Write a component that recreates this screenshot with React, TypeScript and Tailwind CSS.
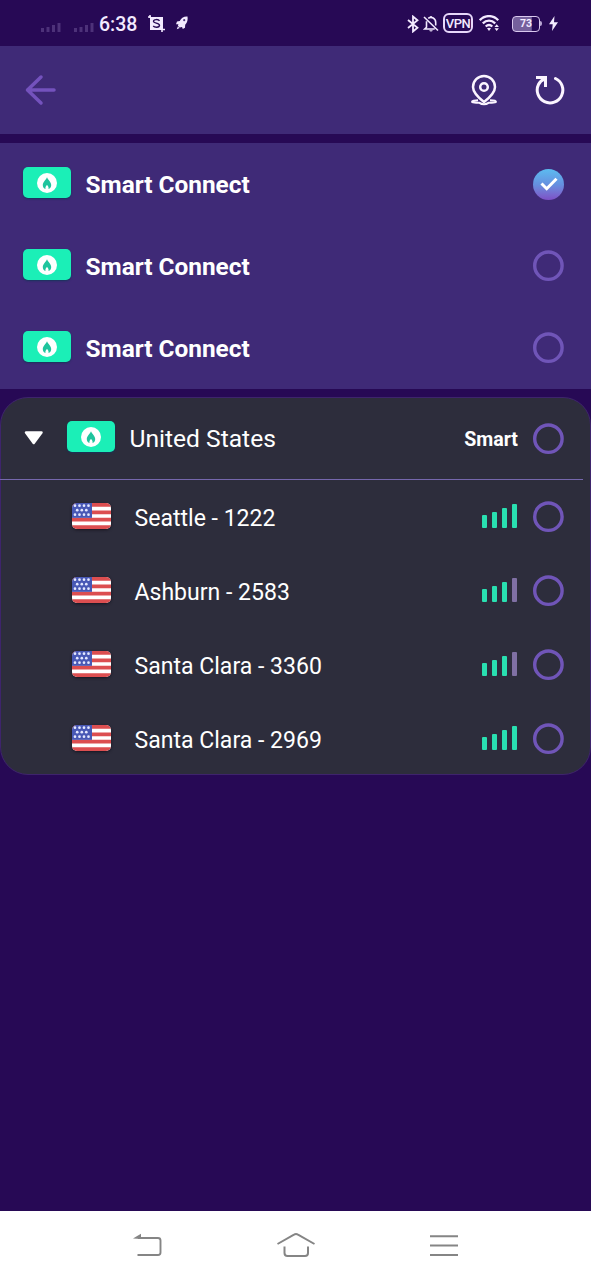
import React from 'react';

function FaintSignal() {
  return (
    <svg className="h-[10px] w-[20px]" viewBox="0 0 20 10" fill="#4d3179">
      <rect x="0" y="6" width="3" height="4" />
      <rect x="5.5" y="5" width="3" height="5" />
      <rect x="11" y="3" width="3" height="7" />
      <rect x="16.5" y="1" width="3" height="9" />
    </svg>
  );
}

function StatusBar() {
  return (
    <div className="flex h-[46px] items-center bg-[#270955] text-[#f3eaff]">
      <div className="mt-[7px] ml-[41px] flex gap-[13px]">
        <FaintSignal />
        <FaintSignal />
      </div>
      <span className="mt-[3px] ml-[5px] w-[38px] whitespace-nowrap text-[19.5px] leading-none font-medium">6:38</span>
      <svg className="mt-px ml-[11px] h-[17px] w-[17px]" viewBox="0 0 17 17" fill="none">
        <path d="M0 2H3M2 0V3M14 14V17M14 14.5H17" stroke="#f3eaff" strokeWidth="1.6" />
        <rect x="2" y="2" width="13" height="13" fill="#f3eaff" />
        <path d="M11.5 5.8C10.5 4.100 5.500 4 5.500 6.500c0 2 6 1.400 6 3.800 0 2.600-5 2.200-6.300.8" stroke="#270955" strokeWidth="1.4" />
      </svg>
      <svg className="ml-[11px] h-[14px] w-[12px]" viewBox="0 0 12 14">
        <path d="M11.5.5C7.5.3 5 2.300 3.800 5L1 5.600 0 8.200l2.400.1-.5 1.800 2 1.500L6 10.900l.8 2.200 2.200-1.400.2-3C11.400 6.500 12 3.500 11.500.500Z" fill="#f3eaff" />
        <circle cx="8.200" cy="4.200" r="1.100" fill="#4c347a" />
        <path d="M1.800 10.500.800 13.300 3.800 12Z" fill="#f3eaff" />
      </svg>
      <svg className="mt-px ml-[219px] h-[18px] w-[12px]" viewBox="0 0 12 18" fill="none" stroke="#f3eaff" strokeWidth="1.800">
        <path d="M1 5 10.500 12.800 6 16.500V1.500L10.500 5.200 1 13" />
      </svg>
      <svg className="mt-px ml-[4px] h-[18px] w-[16px]" viewBox="0 0 16 18" fill="none" stroke="#f3eaff" strokeWidth="1.600">
        <path d="M1 2 15 15.500M5.200 3.300C8.500 1 12.700 3.500 12.700 7.500V10.500M3.500 6.200V12.200L1.700 14H11.700M8 1V2.500" />
        <path d="M6.200 15.300A1.900 1.900 0 0 0 9.800 15.300Z" fill="#f3eaff" stroke="none" />
      </svg>
      <div className="ml-[4px] flex h-[20px] w-[30px] items-center justify-center rounded-[6px] border-2 border-[#e7d7fa] text-[13px] leading-none font-medium tracking-[-0.4px]">VPN</div>
      <svg className="mt-px ml-[6px] h-[17px] w-[21px]" viewBox="0 0 21 17" fill="none" stroke="#f3eaff" strokeWidth="2.300">
        <path d="M.8 5.200C6-.3 14-.3 19.200 5.200M3.800 8.400C7.500 4.700 12.500 4.700 16.200 8.400M6.700 11.500C8.700 9.700 11.300 9.700 13.300 11.500" />
        <path d="M8 13.300Q10 12 12 13.300L10 16Z" fill="#f3eaff" stroke="none" />
        <path d="M15.500 12 17.700 9.300 19.900 12ZM15.500 13.300 17.700 16 19.900 13.300Z" fill="#f3eaff" stroke="none" />
      </svg>
      <div className="mt-px ml-[12px] flex h-[16px] w-[28px] items-center justify-center rounded-[4px] border-[1.5px] border-[#d9c8ee] bg-linear-to-r from-[#75609c] from-70% to-[#270955] to-75% pt-px text-[10.5px] leading-none font-bold">73</div>
      <div className="h-[5px] w-[2px] rounded-r-sm bg-[#b8a5d2]" />
      <svg className="ml-[7px] h-[15px] w-[9px]" viewBox="0 0 9 15"><path d="M5.500 0 0 8.300H3.700L3 15 9 6.200H5Z" fill="#f3eaff" /></svg>
    </div>
  );
}

function Header() {
  return (
    <header className="flex h-[88px] items-center bg-[#3f2a77]">
      <svg className="ml-[25px] h-[32px] w-[32px]" viewBox="0 0 32 32" fill="none" stroke="#7452bd" strokeWidth="3.500" strokeLinecap="round" strokeLinejoin="round">
        <path d="M16 3 2.500 16 16 29M2.500 16H29" />
      </svg>
      <svg className="ml-auto h-[32px] w-[28px]" viewBox="0 0 28 32" fill="none" stroke="#fbf5ff" strokeWidth="2.500" strokeLinejoin="round">
        <path d="M14 28C9.500 24.500 3 18.500 3 13a11 11 0 0 1 22 0c0 5.500-6.500 11.500-11 15Z" />
        <circle cx="14" cy="13" r="3.800" />
        <path d="M8 26.300C4.500 26.300 2 26.900 2 27.800c0 1 4 1 7 .8 3 2 7 2 10 0 3 .2 7 .2 7-.8 0-.9-2.500-1.500-6-1.500" strokeWidth="1.900" />
      </svg>
      <svg className="mr-[26px] ml-[37px] h-[32px] w-[30px]" viewBox="0 0 30 32" fill="none" stroke="#fbf5ff" strokeWidth="3">
        <path d="M20.500 4.500A12.800 12.800 0 1 1 3.500 10.500Q5.500 6.500 9.500 5" strokeLinecap="round" />
        <path d="M1 3.500H10.500V13" />
      </svg>
    </header>
  );
}

function FlameBadge() {
  return (
    <div className="flex h-[31px] w-[48px] shrink-0 items-center justify-center rounded-[5px] bg-[#1befb7] shadow-[0_1px_2px_#17345b]">
      <svg className="h-[20px] w-[20px]" viewBox="0 0 20 20">
        <circle cx="10" cy="10" r="10" fill="#fff" />
        <path d="M10 4.200C11 7 14.200 8.800 14.200 12.200c0 1.900-1.200 3.300-2.700 3.900.4-1.900-.4-3-1.500-4.100-1.100 1.100-1.900 2.200-1.500 4.100-1.500-.6-2.700-2-2.700-3.900C5.800 8.800 9 7 10 4.200Z" fill="#1fc49d" />
      </svg>
    </div>
  );
}

function Radio({ checked = false }: { checked?: boolean }) {
  if (checked) {
    return (
      <div className="flex size-[31px] shrink-0 items-center justify-center rounded-full bg-linear-to-b from-[#5bbcf0] via-[#6590e0] to-[#7c50c6]">
        <svg className="h-[14px] w-[18px]" viewBox="0 0 18 14" fill="none" stroke="#fff" strokeWidth="3"><path d="M1.500 6.500 6.700 11.700 16.500 1.700" /></svg>
      </div>
    );
  }
  return (
    <svg className="block size-[32px] shrink-0" viewBox="0 0 32 32" fill="none">
      <circle cx="15.400" cy="15.700" r="13.700" stroke="#7055b8" strokeWidth="3.400" />
    </svg>
  );
}

function Signal({ strength }: { strength: number }) {
  return (
    <div className="flex h-[24px] w-[35px] items-end justify-between">
      <div className="h-[13px] w-[5px] rounded-[1px] bg-[#29e0b1]" />
      <div className="h-[16px] w-[5px] rounded-[1px] bg-[#29e0b1]" />
      <div className="h-[20px] w-[5px] rounded-[1px] bg-[#29e0b1]" />
      <div className={strength === 4 ? 'h-[24px] w-[5px] rounded-[1px] bg-[#29e0b1]' : 'h-[24px] w-[5px] rounded-[1px] bg-[#8070a4]'} />
    </div>
  );
}

function Flag() {
  const stars = [[3, 2.700], [7.500, 2.700], [12, 2.700], [16.500, 2.700], [5.200, 7.200], [9.800, 7.200], [14.300, 7.200], [3, 11.700], [7.500, 11.700], [12, 11.700], [16.500, 11.700]];
  return (
    <div className="h-[26px] w-[39px] overflow-hidden rounded-[5px] shadow-[0_1px_3px_#171420]">
      <svg className="block h-full w-full" viewBox="0 0 39 26">
        <rect width="39" height="26" fill="#fff" />
        <path d="M0 1.860H39M0 9.290H39M0 16.710H39M0 24.140H39" stroke="#dc4e50" strokeWidth="3.714" />
        <rect width="20" height="14.860" fill="#4858b5" />
        {stars.map(([x, y]) => <circle key={`${x}-${y}`} cx={x} cy={y} r="1.350" fill="#e4e8ff" />)}
      </svg>
    </div>
  );
}

const servers = [
  { name: 'Seattle - 1222', strength: 4 },
  { name: 'Ashburn - 2583', strength: 3 },
  { name: 'Santa Clara - 3360', strength: 3 },
  { name: 'Santa Clara - 2969', strength: 4 },
];

export default function App() {
  return (
    <div className="flex h-[1280px] w-[591px] flex-col overflow-hidden bg-[#270955] font-['Roboto',sans-serif] text-white">
      <StatusBar />
      <Header />
      <section className="mt-[9px] bg-[#3f2a77]">
        {[true, false, false].map((checked, i) => (
          <div key={i} className="flex h-[82px] items-center pr-[27px] pl-[23px]">
            <div className="-mt-[3px]"><FlameBadge /></div>
            <span className="ml-[14.5px] pt-[2px] text-[24.4px] font-bold">Smart Connect</span>
            <div className={checked ? 'ml-auto' : '-mr-px ml-auto'}><Radio checked={checked} /></div>
          </div>
        ))}
      </section>
      <section className="mt-[8px] h-[378px] rounded-[28px] border border-[#3e246c] bg-[#2d2d3c]">
        <div className="mr-[7px] -ml-px flex h-[82px] items-center border-b border-[#7567ad] pr-[18px] pl-[24px]">
          <svg className="-mt-px h-[14px] w-[20px]" viewBox="0 0 20 14"><path d="M2 1.500H17.500L9.700 12Z" fill="#fff" stroke="#fff" strokeWidth="2.500" strokeLinejoin="round" /></svg>
          <div className="-mt-[4px] ml-[23px]"><FlameBadge /></div>
          <span className="ml-[14.5px] pt-[2px] text-[24.6px]">United States</span>
          <span className="ml-auto pt-[3px] text-[19.6px] font-bold">Smart</span>
          <div className="ml-[15px]"><Radio /></div>
        </div>
        {servers.map((server) => (
          <div key={server.name} className="flex h-[74px] items-center pr-[25px] pl-[71px]">
            <div className="-mt-[3px]"><Flag /></div>
            <span className="ml-[23.5px] pt-[5px] text-[23.05px]">{server.name}</span>
            <div className="-mt-[2px] ml-auto"><Signal strength={server.strength} /></div>
            <div className="ml-[16px]"><Radio /></div>
          </div>
        ))}
      </section>
      <nav className="mt-auto h-[69px] bg-white">
        <div className="flex h-full items-center pl-[133px]">
          <svg className="h-[26px] w-[29px]" viewBox="0 0 29 26" fill="none" stroke="#858585" strokeWidth="1.900">
            <path d="M5 5H25Q27.500 5 27.500 7.500V19.500Q27.500 22 25 22H4.500" />
            <path d="M0 5.500 8 .700V6Z" fill="#858585" stroke="none" />
          </svg>
          <svg className="ml-[114px] h-[26px] w-[40px]" viewBox="0 0 40 26" fill="none" stroke="#858585" strokeWidth="2">
            <path d="M1.500 11 18 1.700Q20 .500 22 1.700L38.500 11M8.500 13.500V20Q8.500 23 11.500 23H29Q32 23 32 20V13.500" />
          </svg>
          <svg className="ml-[114px] h-[26px] w-[28px]" viewBox="0 0 28 26" stroke="#858585" strokeWidth="2"><path d="M0 3.200H28M0 12.600H28M0 22H28" /></svg>
        </div>
      </nav>
    </div>
  );
}
